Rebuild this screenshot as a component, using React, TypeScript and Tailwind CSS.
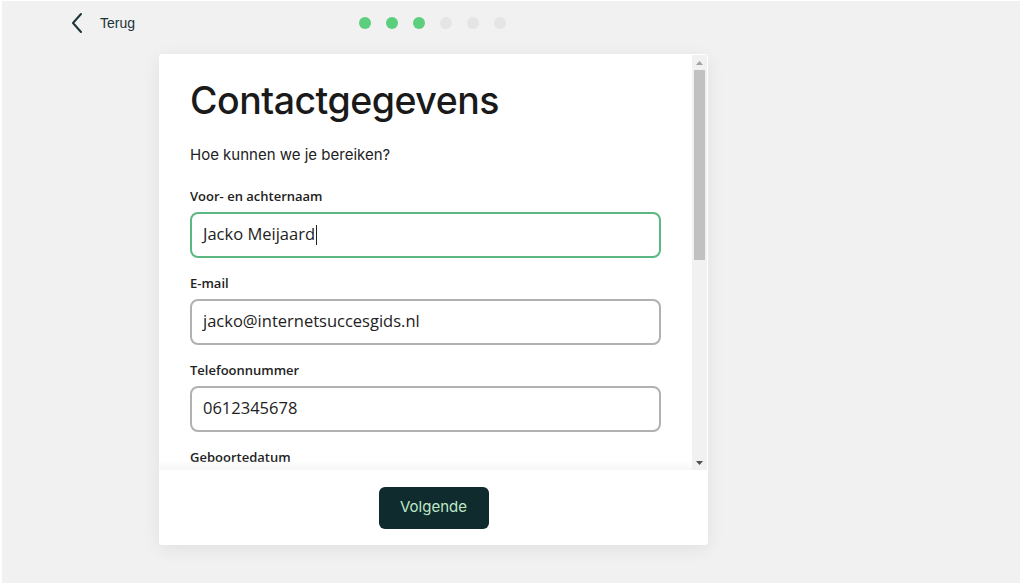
import React from "react";

const STEPS = [true, true, true, false, false, false];

const FIELDS = [
  { label: "Voor- en achternaam", value: "Jacko Meijaard", focus: true },
  { label: "E-mail", value: "jacko@internetsuccesgids.nl" },
  { label: "Telefoonnummer", value: "0612345678" },
  { label: "Geboortedatum", value: "" },
];

function Field({ label, value, focus }: { label: string; value: string; focus?: boolean }) {
  return (
    <div className="flex flex-col gap-[8px]">
      <label className="font-['Open_Sans',sans-serif] text-[13px] font-semibold leading-[16px] text-[#222]">
        {label}
      </label>
      <div
        className={
          focus
            ? "flex h-[46px] shrink-0 items-center rounded-[8px] border-2 border-[#5cb883] px-[11px]"
            : "flex h-[46px] shrink-0 items-center rounded-[8px] border-2 border-[#b1b1b1] px-[11px]"
        }
      >
        <span className="font-['Open_Sans',sans-serif] text-[16.5px] text-[#222]">{value}</span>
        {focus && <span className="ml-[1px] h-[20px] w-px bg-[#222]" />}
      </div>
    </div>
  );
}

function Scrollbar() {
  return (
    <div className="flex w-[15px] shrink-0 flex-col bg-[#f1f1f1]">
      <div className="flex h-[15px] items-center justify-center">
        <svg width="7" height="4" viewBox="0 0 7 4" aria-hidden>
          <path d="M0 4 L3.5 0 L7 4 Z" fill="#a3a3a3" />
        </svg>
      </div>
      <div className="flex flex-1 flex-col px-[2px]">
        <div className="h-[190px] bg-[#c1c1c1]" />
      </div>
      <div className="flex h-[15px] items-center justify-center">
        <svg width="7" height="4" viewBox="0 0 7 4" aria-hidden>
          <path d="M0 0 L7 0 L3.5 4 Z" fill="#505050" />
        </svg>
      </div>
    </div>
  );
}

export default function App() {
  return (
    <div className="h-[586px] w-[1024px] bg-white pt-px pl-[2px] pr-[4px] pb-[3px]">
      <div className="flex h-full flex-col items-start bg-[#f0f1f0]">
        <div className="flex h-[44px] w-full items-center">
          <div className="flex w-[285px] items-center gap-[14px] pl-[68px]">
            <svg width="16" height="22" viewBox="0 0 16 22" fill="none" aria-hidden>
              <path d="M11 2 L3 11 L11 20" stroke="#1b3438" strokeWidth="2" strokeLinecap="round" strokeLinejoin="round" />
            </svg>
            <span className="font-['Liberation_Sans',sans-serif] text-[14px] text-[#1b3438]">Terug</span>
          </div>
          <div className="flex items-center gap-[15px] pl-[72px]">
            {STEPS.map((done, i) => (
              <span
                key={i}
                className={done ? "h-[12px] w-[12px] rounded-full bg-[#5ccf7f]" : "h-[12px] w-[12px] rounded-full bg-[#e4e5e4]"}
              />
            ))}
          </div>
        </div>

        <div className="ml-[157px] mt-[9px] flex h-[491px] w-[549px] flex-col rounded-[3px] bg-white shadow-[0_4px_18px_rgba(0,0,0,0.07)]">
          <div className="flex h-[416px] pt-px pr-px">
            <div className="relative flex-1 overflow-hidden">
              <div className="px-[31px] pt-[24px]">
                <h1 className="font-['Inter',sans-serif] text-[37.5px] font-medium leading-[44px] tracking-[-0.5px] text-[#1a1a1a]">
                  Contactgegevens
                </h1>
                <p className="mt-[21px] font-['Inter',sans-serif] text-[15px] text-[#222]">Hoe kunnen we je bereiken?</p>
                <div className="mt-[21px] flex flex-col gap-[17px]">
                  {FIELDS.map((f) => (
                    <Field key={f.label} {...f} />
                  ))}
                </div>
              </div>
              <div className="absolute inset-x-0 bottom-0 h-[10px] bg-gradient-to-b from-white/0 to-[#f7f7f7]" />
            </div>
            <Scrollbar />
          </div>
          <div className="flex flex-1 items-center justify-center">
            <button className="h-[42px] w-[110px] rounded-[6px] bg-[#0f2b2e] font-['Inter',sans-serif] text-[15px] text-[#bfe8c6]">
              Volgende
            </button>
          </div>
        </div>
      </div>
    </div>
  );
}
